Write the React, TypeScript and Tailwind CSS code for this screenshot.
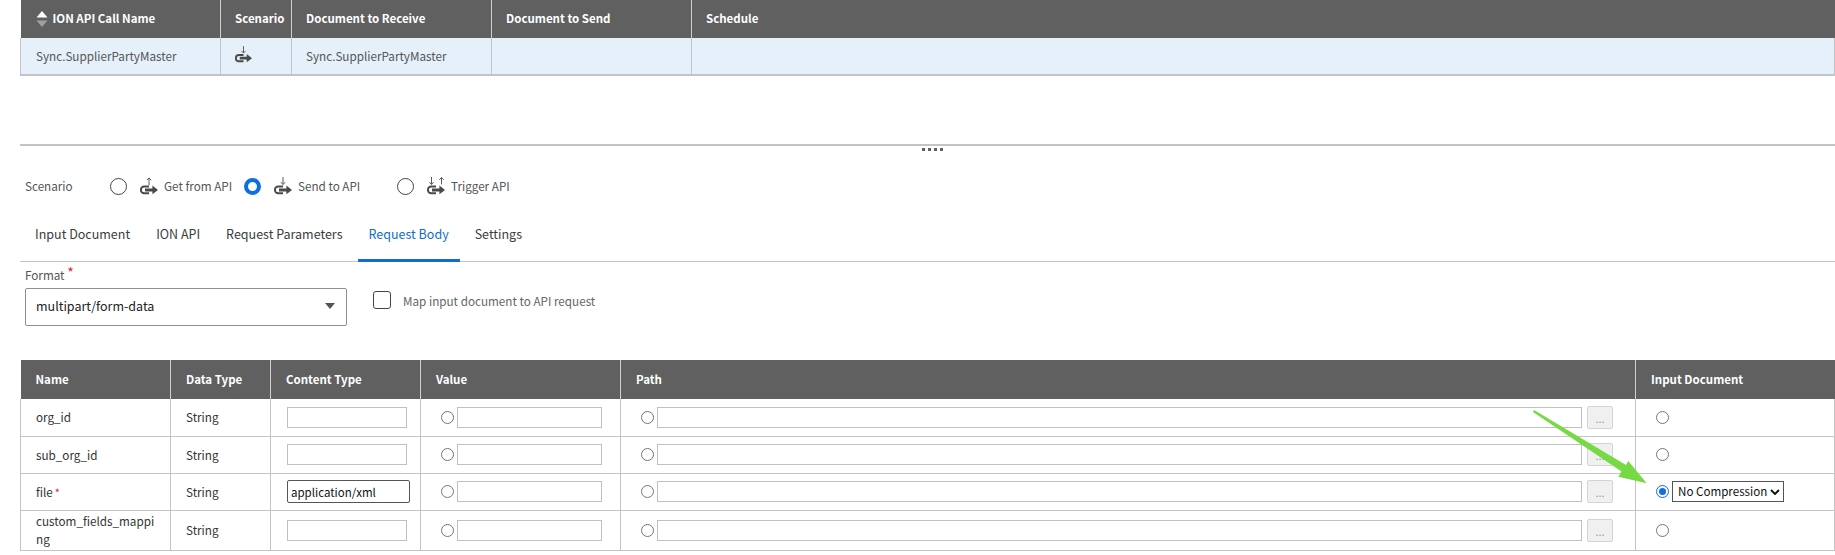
import React from "react";

const font = "font-['Noto_Sans_CJK_SC','Noto_Sans',sans-serif]";

// scenario glyph: hook + right arrow, with small arrows on top
const ScenarioIcon = ({ kind, className }: { kind: "get" | "send" | "trigger"; className?: string }) => (
  <svg viewBox="0 0 18 18" className={className} fill="none">
    <path d="M9 9.6H4.2a3.3 3.3 0 0 0 0 6.6H9" stroke="#4a4a4a" strokeWidth="2" />
    <path d="M5 11.4h7.4V8.6L18 12.9l-5.6 4.3v-2.8H5z" fill="#4a4a4a" />
    {kind === "get" && <path d="M9 8.2V1M6.8 3.2L9 .9l2.2 2.3" stroke="#5a5a5a" strokeWidth="1" />}
    {kind === "send" && <path d="M9 0v7.4M6.8 5.2L9 7.5l2.2-2.3" stroke="#5a5a5a" strokeWidth="1" />}
    {kind === "trigger" && (
      <>
        <path d="M4.5 0v7.4M2.4 5.2l2.1 2.3 2.1-2.3" stroke="#5a5a5a" strokeWidth="1" />
        <path d="M14.5 7.4V.6M12.4 2.8L14.5.5l2.1 2.3" stroke="#5a5a5a" strokeWidth="1" />
      </>
    )}
  </svg>
);

const BigRadio = ({ on }: { on?: boolean }) =>
  on ? (
    <span className="block w-[17px] h-[17px] rounded-full border-[4px] border-[#0f6fde] bg-white shrink-0" />
  ) : (
    <span className="block w-[17px] h-[17px] rounded-full border border-[#444] bg-white shrink-0" />
  );

const SmallRadio = ({ on }: { on?: boolean }) =>
  on ? (
    <span className="block w-[13px] h-[13px] rounded-full border border-[#0f6fde] bg-white p-[2px] shrink-0">
      <span className="block w-full h-full rounded-full bg-[#0f6fde]" />
    </span>
  ) : (
    <span className="block w-[13px] h-[13px] rounded-full border border-[#767676] bg-white shrink-0" />
  );

const rows = [
  { name: "org_id" },
  { name: "sub_org_id" },
  { name: "file", required: true, content: "application/xml", selected: true },
  { name: "custom_fields_mapping", tall: true },
];

const topHeads = ["ION API Call Name", "Scenario", "Document to Receive", "Document to Send", "Schedule"];

const App = () => {
  return (
    <div className={`${font} relative w-[1835px] h-[555px] overflow-hidden bg-white text-[11.7px] text-[#555]`}>
      {/* TOP TABLE */}
      <div className="ml-5">
        <table className="table-fixed border-collapse w-[1815px]">
          <colgroup>
            <col className="w-[200px]" />
            <col className="w-[71px]" />
            <col className="w-[200px]" />
            <col className="w-[200px]" />
            <col />
          </colgroup>
          <thead>
            <tr className="h-[38px] bg-[#606060] text-white">
              {topHeads.map((h, i) => (
                <th key={h} className={`text-left font-bold text-[11.5px] border-l border-[#d0d0d0] first:border-l-0 ${i === 0 ? "pl-[15px]" : "pl-[14px] pr-0"}`}>
                  {i === 0 ? (
                    <span className="flex items-center gap-[5px]">
                      <svg viewBox="0 0 12 16" className="w-3 h-4">
                        <path d="M6 0l5.5 6.5H.5z" fill="#ffffff" />
                        <path d="M6 16l5.5-6.5H.5z" fill="#a0a0a0" />
                      </svg>
                      {h}
                    </span>
                  ) : (
                    h
                  )}
                </th>
              ))}
            </tr>
          </thead>
          <tbody>
            <tr className="h-[37px] bg-[#e5f0fb] border-b-2 border-[#c0c4c8]">
              <td className="pl-[15px] border-l border-[#c0c4c8]">Sync.SupplierPartyMaster</td>
              <td className="pl-[14px] border-l border-[#c0c4c8]">
                <ScenarioIcon kind="send" className="w-[17px] h-[17px] -mt-[3px]" />
              </td>
              <td className="pl-[14px] border-l border-[#c0c4c8]">Sync.SupplierPartyMaster</td>
              <td className="border-l border-[#c0c4c8]" />
              <td className="border-l border-r border-[#c0c4c8]" />
            </tr>
          </tbody>
        </table>
      </div>

      {/* SPLITTER */}
      <div className="ml-5 mt-[68px] border-t-2 border-[#c4c4c4] h-[7px] flex justify-center items-end">
        <div className="flex gap-[3px] ml-[10px]">
          <span className="w-[3px] h-[3px] bg-[#606060]" />
          <span className="w-[3px] h-[3px] bg-[#606060]" />
          <span className="w-[3px] h-[3px] bg-[#606060]" />
          <span className="w-[3px] h-[3px] bg-[#606060]" />
        </div>
      </div>

      {/* SCENARIO */}
      <div className="flex items-center h-[20px] mt-[25px] pl-[25px] text-[#555]">
        <span className="w-[85px]">Scenario</span>
        <BigRadio />
        <ScenarioIcon kind="get" className="w-[18px] h-[18px] ml-[13px]" />
        <span className="ml-[6px] w-[67px] whitespace-nowrap">Get from API</span>
        <span className="ml-[13px]"><BigRadio on /></span>
        <ScenarioIcon kind="send" className="w-[18px] h-[18px] ml-[13px]" />
        <span className="ml-[6px] w-[62px] whitespace-nowrap">Send to API</span>
        <span className="ml-[37px]"><BigRadio /></span>
        <ScenarioIcon kind="trigger" className="w-[18px] h-[18px] ml-[13px]" />
        <span className="ml-[6px] whitespace-nowrap">Trigger API</span>
      </div>

      {/* TABS */}
      <div className="ml-5 mt-[19px] h-[47px] border-b border-[#c4c4c4] flex gap-[4px] pl-[4px] text-[12.5px]">
        {["Input Document", "ION API", "Request Parameters", "Request Body", "Settings"].map((t) => (
          <div
            key={t}
            className={`h-[47px] px-[11px] flex items-center ${t === "Request Body" ? "text-[#0f6fc6] border-b-[3px] border-[#0f6fc6] pb-[5px]" : "text-[#3c3c3c] pb-[8px]"}`}
          >
            {t}
          </div>
        ))}
      </div>

      {/* FORMAT */}
      <div className="flex items-start pl-[25px] mt-[3px]">
        <div className="w-[322px]">
          <div className="h-[20px] leading-[20px] text-[#555]">
            Format <span className="text-[#d9262c] text-[14px] leading-[14px] align-top">*</span>
          </div>
          <div className="mt-[3px] h-[38px] border border-[#8f8f8f] rounded-[2px] flex items-center justify-between pl-[10px] pr-[11px] pb-[2px] text-[#222] text-[12.5px]">
            multipart/form-data
            <span className="w-0 h-0 border-x-[5px] border-x-transparent border-t-[6px] border-t-[#555]" />
          </div>
        </div>
        <div className="ml-[26px] mt-[25px] flex items-center">
          <span className="block w-[18px] h-[18px] rounded-[3px] border border-[#444] bg-white" />
          <span className="ml-[12px] text-[#666] pt-[2px]">Map input document to API request</span>
        </div>
      </div>

      {/* PARAMETER TABLE */}
      <div className="ml-5 mt-[34px]">
        <table className="table-fixed border-collapse w-[1815px]">
          <colgroup>
            <col className="w-[150px]" />
            <col className="w-[100px]" />
            <col className="w-[150px]" />
            <col className="w-[200px]" />
            <col className="w-[1015px]" />
            <col />
          </colgroup>
          <thead>
            <tr className="h-[39px] bg-[#606060] text-white">
              {["Name", "Data Type", "Content Type", "Value", "Path", "Input Document"].map((h) => (
                <th key={h} className="text-left font-bold text-[11.5px] pl-[15px] border-l border-[#d0d0d0] first:border-l-0">
                  {h}
                </th>
              ))}
            </tr>
          </thead>
          <tbody>
            {rows.map((r) => (
              <tr key={r.name} className={`${r.tall ? "h-[40px]" : "h-[37px]"} border-b border-[#c4c4c4] text-[#333]`}>
                <td className="pl-[15px] pr-[14px] border-l border-[#c4c4c4] break-all leading-[18px]">
                  {r.name}
                  {r.required && <span className="text-[#d9262c] ml-[2px] text-[11px] align-top">*</span>}
                </td>
                <td className="pl-[15px] border-l border-[#c4c4c4]">String</td>
                <td className="pl-4 border-l border-[#c4c4c4]">
                  {r.content ? (
                    <div className="w-[123px] h-[23px] border border-[#555] rounded-[2px] pl-[3px] leading-[22px] text-[#111] text-[11.5px]">{r.content}</div>
                  ) : (
                    <div className="w-[120px] h-[21px] border border-[#c0c0c0]" />
                  )}
                </td>
                <td className="pl-5 border-l border-[#c4c4c4]">
                  <div className="flex items-center gap-[3px]">
                    <SmallRadio />
                    <div className="w-[145px] h-[21px] border border-[#c0c0c0]" />
                  </div>
                </td>
                <td className="pl-5 border-l border-[#c4c4c4]">
                  <div className="flex items-center gap-[3px]">
                    <SmallRadio />
                    <div className="w-[925px] h-[21px] border border-[#c0c0c0]" />
                    <div className="ml-[2px] w-[26px] h-[23px] border border-[#d4d4d4] bg-[#f0f0f0] rounded-[2px] text-[11px] leading-[22px] text-center text-[#999]">...</div>
                  </div>
                </td>
                <td className="pl-5 border-x border-[#c4c4c4]">
                  <div className="flex items-center gap-[3px]">
                    <SmallRadio on={r.selected} />
                    {r.selected && (
                      <div className="w-[112px] h-[21px] border border-[#555] pl-[5px] pr-[3px] flex items-center justify-between text-[#111] text-[11.6px] whitespace-nowrap">
                        No Compression
                        <svg viewBox="0 0 10 6" className="w-[10px] h-[6px]" fill="none">
                          <path d="M1 1l4 4 4-4" stroke="#111" strokeWidth="1.9" />
                        </svg>
                      </div>
                    )}
                  </div>
                </td>
              </tr>
            ))}
          </tbody>
        </table>
      </div>

      {/* GREEN ANNOTATION ARROW */}
      <svg viewBox="0 0 1835 555" className="absolute inset-0 w-[1835px] h-[555px] pointer-events-none">
        <path d="M1534 410 L1626 465 L1628.3 461 L1646.7 483.3 L1618.3 476.7 L1621.5 471.5 L1533 412 Z" fill="#77d944" />
      </svg>
    </div>
  );
};

export default App;
